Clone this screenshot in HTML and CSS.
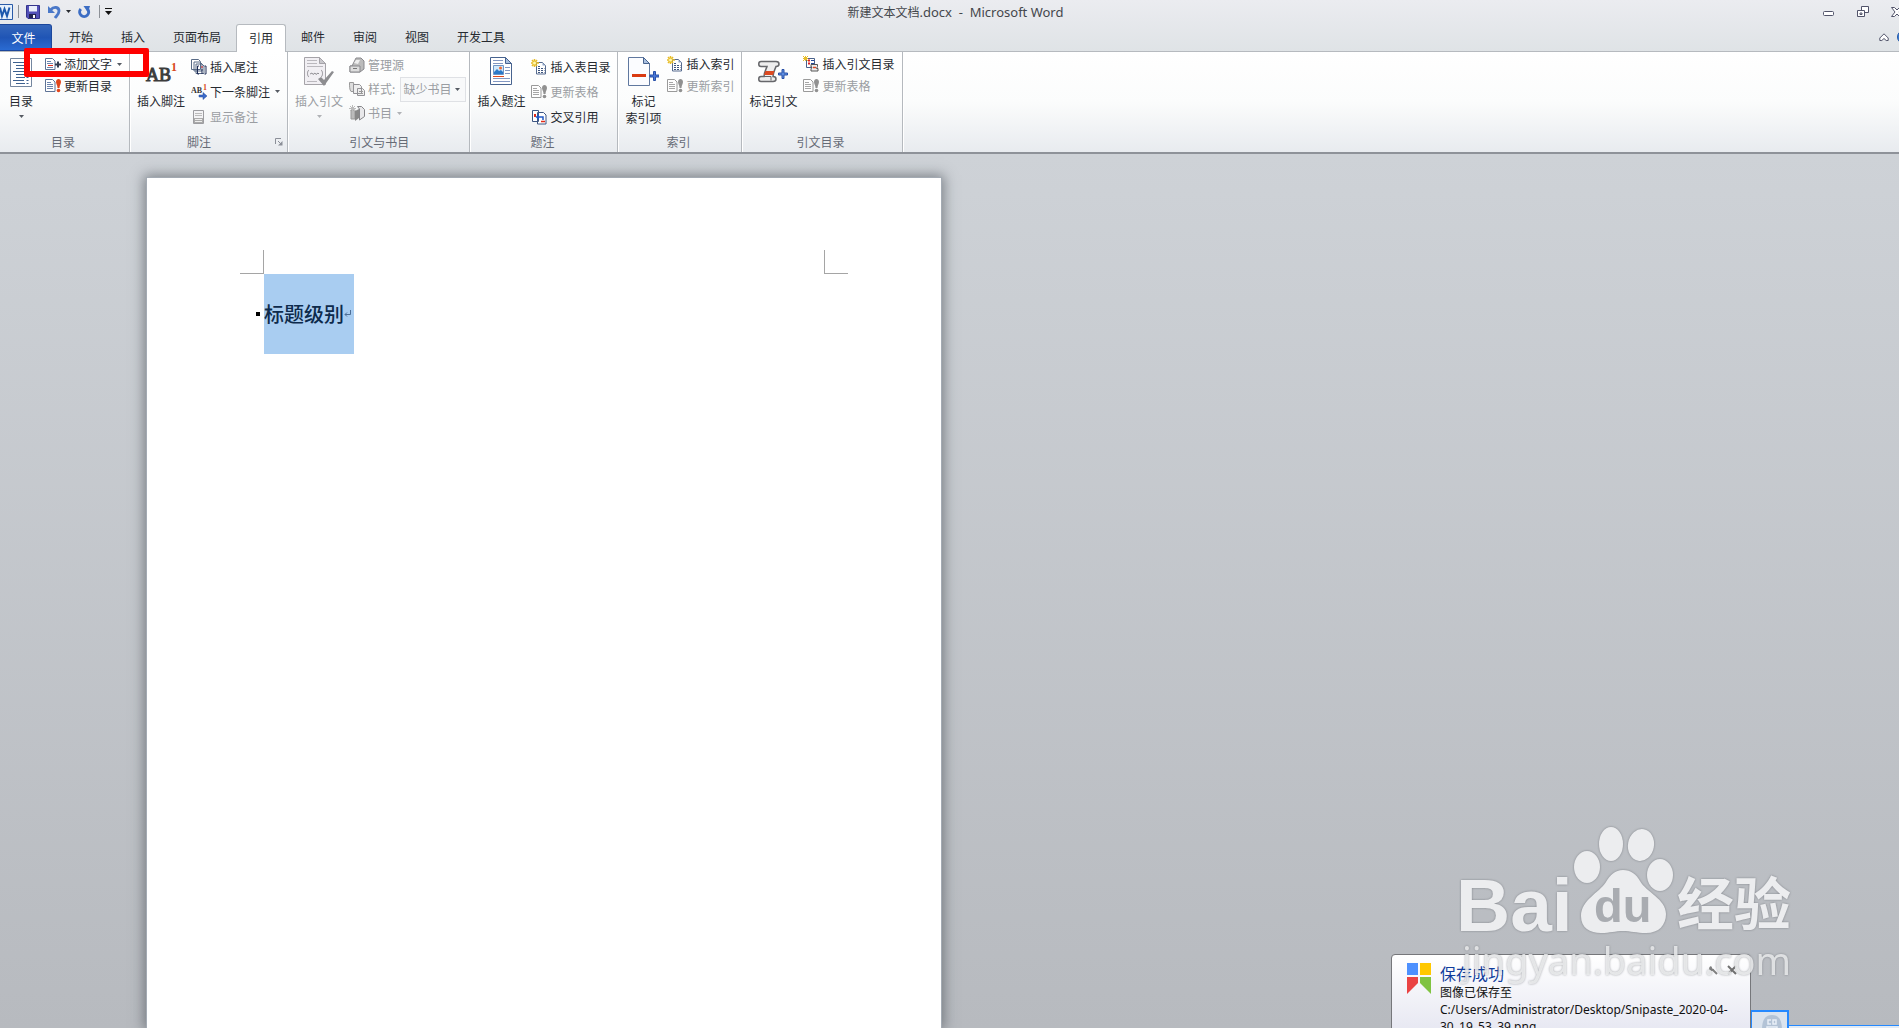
FILE: index.html
```html
<!DOCTYPE html>
<html lang="zh-CN">
<head>
    <meta charset="UTF-8">
    <meta name="viewport" content="width=device-width, initial-scale=1.0">
    <title>新建文本文档.docx - Microsoft Word</title>
    <link rel="stylesheet" href="styles.css">
</head>
<body>
    <!-- Shared icons -->
    <svg class="sprite" aria-hidden="true">
        <symbol id="arrow" viewBox="0 0 5 3"><path d="M0 0h5L2.5 3z" fill="currentColor"/></symbol>
        <symbol id="update" viewBox="0 0 16 16">
            <path d="M.5 1.500h7l2.500 2.500v9.500H.5z" fill="#fff" stroke="#5e7396"/>
            <path d="M2 4.500h4M2 6.500h6M2 8.500h6M2 10.500h6" stroke="#6b84ad"/>
            <path d="M11 4c0-4 5-4 5 0 0 2-1.500 3-1.500 6h-2C12.500 7 11 6 11 4z" fill="#e2461b"/>
            <circle cx="13.500" cy="12.500" r="1.800" fill="#e2461b"/>
        </symbol>
        <symbol id="table-new" viewBox="0 0 16 16">
            <path d="M5.500 3.500h6l3 3v8.500h-9z" fill="#fff" stroke="#566b8f"/>
            <path d="M11.500 3.500v3h3z" fill="#8ea4c5"/>
            <path d="M7 7.500h3M7 9.500h6.500M7 11.500h6.500M7 13.500h6.500" stroke="#3e557e" stroke-dasharray="2 1"/>
            <path d="M3.500 0v8M0 4h8M1 1l5 6M6 1L1 7" stroke="#e8bd28" stroke-width="1.500"/>
            <circle cx="3.500" cy="4" r="1.500" fill="#fff8b0"/>
        </symbol>
    </svg>

    <div class="titlebar">
        <div class="quick-access">
            <button class="icon-btn" aria-label="Word"><svg width="13" height="16" viewBox="0 0 13 16"><path d="M0 .5h12.500v15H0" fill="#e6f0fb" stroke="#2a5ba8"/><path d="M0 3.500l2 8.500L4.500 5l2.500 7 2.500-8.500" fill="none" stroke="#1c58ad" stroke-width="2"/></svg></button>
            <span class="divider"></span>
            <button class="icon-btn save" aria-label="保存"><svg width="14" height="14" viewBox="0 0 14 14"><path d="M.5.5h13v13H2l-1.500-1.500z" fill="#5250b8" stroke="#34348c"/><path d="M3 1h8v5.500H3z" fill="#e9eefb"/><path d="M3 9h7v4H3z" fill="#222452"/><path d="M7 10h2v3H7z" fill="#fff"/></svg></button>
            <button class="icon-btn" aria-label="撤消"><svg width="13" height="14" viewBox="0 0 13 14"><path d="M2.500 5C6 1 11 2 11 6c0 3-2 4.500-4 7" fill="none" stroke="#4a78c8" stroke-width="2.800"/><path d="M0 1v7h7z" fill="#4a78c8"/></svg></button>
            <button class="icon-btn" aria-label="撤消列表"><svg width="5" height="3"><use href="#arrow"/></svg></button>
            <button class="icon-btn redo" aria-label="重复"><svg width="13" height="14" viewBox="0 0 13 14"><path d="M2.800 4A4.500 4.500 0 1 0 9.500 4" fill="none" stroke="#3c6dc4" stroke-width="3"/><path d="M5.500 1H12L10 7.500z" fill="#3c6dc4"/></svg></button>
            <span class="divider"></span>
            <button class="icon-btn" aria-label="自定义快速访问工具栏"><svg width="7" height="7" viewBox="0 0 7 7"><path d="M0 0h7v1H0zM0 3h7L3.500 7z" fill="#111"/></svg></button>
        </div>
        <div class="title">新建文本文档<span>.docx&nbsp; -&nbsp; Microsoft Word</span></div>
        <div class="window-controls">
            <button class="icon-btn" aria-label="最小化"><svg width="12" height="12" viewBox="0 0 12 12"><rect x=".5" y="5.500" width="10" height="4" rx="1" fill="#fff" stroke="#52546a"/></svg></button>
            <button class="icon-btn" aria-label="还原"><svg width="12" height="12" viewBox="0 0 12 12" fill="#fff" stroke="#52546a"><path d="M4.500.5h7v6h-7z"/><path d="M.5 4.500h7v6h-7zM3 7h2v1.500H3z"/></svg></button>
            <button class="icon-btn" aria-label="关闭"><svg width="12" height="12" viewBox="0 0 12 12"><path d="M.5 1.500h3L6 4l2.500-2.500h3L8 6l3.500 4.500h-3L6 8l-2.500 2.500h-3L4 6z" fill="#fff" stroke="#52546a"/></svg></button>
        </div>
    </div>

    <div class="tabs">
        <button class="file-tab">文件</button>
        <button class="tab">开始</button>
        <button class="tab">插入</button>
        <button class="tab">页面布局</button>
        <button class="tab active">引用</button>
        <button class="tab">邮件</button>
        <button class="tab">审阅</button>
        <button class="tab">视图</button>
        <button class="tab">开发工具</button>
        <div class="tab-tools">
            <button class="icon-btn" aria-label="功能区最小化"><svg width="10" height="9" viewBox="0 0 10 9"><path d="M5 .8L.8 5v2.500h2L5 5.500l2.200 2h2V5z" fill="#fff" stroke="#52546a"/></svg></button>
            <button class="icon-btn" aria-label="帮助"><svg width="14" height="14"><circle cx="7" cy="7" r="6.500" fill="#3d7bd0" stroke="#2459a8"/></svg></button>
        </div>
    </div>

    <div class="ribbon">
        <div class="group toc">
            <div class="group-body">
                <button class="big">
                    <svg width="32" height="32" viewBox="0 0 32 32"><path d="M5.500 2.500h21v28h-21z" fill="#fff" stroke="#73869f"/><path d="M8 6.500h11M11 9.500h9M11 12.500h9M8 15.500h11M11 18.500h9M11 21.500h9M8 24.500h11M11 27.500h9" stroke="#3d618f"/><path d="M22.500 6v23" stroke="#3d618f" stroke-width="2" stroke-dasharray="1 2"/></svg>
                    <span>目录</span>
                    <svg class="arrow" width="5" height="3"><use href="#arrow"/></svg>
                </button>
                <div class="rows">
                    <button class="row"><svg width="16" height="16" viewBox="0 0 16 16"><path d="M.5 2.500h7l2.500 2.500v8.500H.5z" fill="#fff" stroke="#5e7396"/><path d="M2 5.500h4M2 7.500h6M2 11.500h6" stroke="#6b84ad"/><path d="M3 9.500h5" stroke="#e03020"/><path d="M10 8.500h6M13 5.500v6" stroke="#333c50" stroke-width="2"/></svg>添加文字<svg class="arrow" width="5" height="3"><use href="#arrow"/></svg></button>
                    <button class="row"><svg width="16" height="16"><use href="#update"/></svg>更新目录</button>
                </div>
            </div>
            <div class="group-name">目录</div>
        </div>

        <div class="group notes">
            <div class="group-body">
                <button class="big">
                    <svg width="32" height="32" viewBox="0 0 32 32"><text x="1" y="25" class="ab">AB</text><text x="26" y="15" class="ab-one">1</text></svg>
                    <span>插入脚注</span>
                </button>
                <div class="rows three">
                    <button class="row"><svg width="16" height="16" viewBox="0 0 16 16"><path d="M.5.5h7l2 2v8h-9zM3 3h6l2 2v7H3zM5 5h6l2 2v7.500H5z" fill="#fff" stroke="#596b86"/><path d="M8 7H6.500v8H8M13.500 7H15v8h-1.500M11 10v5" fill="none" stroke="#1d2a55"/><path d="M10 8h2" stroke="#d22"/></svg>插入尾注</button>
                    <button class="row"><svg width="16" height="16" viewBox="0 0 16 16"><text x="0" y="9" class="ab-small">AB</text><text x="12" y="6" class="ab-small-one">1</text><path d="M8 11h4V8.500l4 3.500-4 3.500V13H8z" fill="#3a6bcb" stroke="#234a9b" stroke-width=".5"/></svg>下一条脚注<svg class="arrow" width="5" height="3"><use href="#arrow"/></svg></button>
                    <button class="row" disabled><svg width="16" height="16" viewBox="0 0 16 16"><path d="M2.500 1.500h10v13h-10z" fill="#f3f3f5" stroke="#9c9ca0"/><path d="M4 4.500h7M4 6.500h7" stroke="#bbb"/><path d="M3 9h9v5H3z" fill="#aaa"/><path d="M4 10.500h7M4 12.500h7" stroke="#eee"/></svg>显示备注</button>
                </div>
            </div>
            <div class="group-name">脚注<button class="icon-btn launcher" aria-label="脚注和尾注"><svg width="8" height="8" viewBox="0 0 8 8"><path d="M.5 6V.5H6" fill="none" stroke="#8b8f98"/><path d="M3 3l3 3" stroke="#8b8f98"/><path d="M7.500 3v4.500H3z" fill="#8b8f98"/></svg></button></div>
        </div>

        <div class="group citations">
            <div class="group-body">
                <button class="big" disabled>
                    <svg width="32" height="32" viewBox="0 0 32 32"><path d="M1.500 1.500h15l6 6v21h-21z" fill="#f1eff3" stroke="#a5a3a8"/><path d="M16.500 1.500v6h6z" fill="#c9c8cc" stroke="#a5a3a8"/><path d="M4 4.500h10M4 7.500h10M4 10.500h16M4 25.500h10" stroke="#bab8bd"/><path d="M6 14c-2 1-2 6 0 7M18 14c2 1 2 6 0 7M7 18l2-1 1 1.500 2-1.500 1 1.500 2-1.500 1 1" fill="none" stroke="#8f8e93"/><path d="M15 23l3-2 3 3L29 15l2 1-10 14z" fill="#8d8d90"/></svg>
                    <span>插入引文</span>
                    <svg class="arrow" width="5" height="3"><use href="#arrow"/></svg>
                </button>
                <div class="rows">
                    <button class="row" disabled><svg width="16" height="16" viewBox="0 0 16 16"><path d="M5 5l2-4h5l3 3v8l-4 3H1V9h2z" fill="#bbb" stroke="#89898d"/><path d="M5 6l2-3h4l-2 4z" fill="#eee"/><path d="M1 9h10v6H1z" fill="#ddd" stroke="#89898d"/><path d="M4 11.500h4" stroke="#777"/></svg>管理源</button>
                    <div class="row style-row">
                        <svg width="16" height="16" viewBox="0 0 16 16"><path d="M.5 1.500h4l1 9H2C.5 9 .5 5 .5 1.500z" fill="#ddd" stroke="#999"/><path d="M4.500 3.500h6l2 2v7h-8zM8.500 7.500h5l2 2v5h-7z" fill="#eee" stroke="#929296"/><path d="M10 10.500h4M10 12.500h4" stroke="#999"/></svg>
                        <label for="citation-style">样式:</label>
                        <span class="combo">
                            <select id="citation-style" disabled><option>缺少书目</option></select>
                            <svg class="arrow" width="5" height="3"><use href="#arrow"/></svg>
                        </span>
                    </div>
                    <button class="row" disabled><svg width="16" height="16" viewBox="0 0 16 16"><path d="M2 5h4v9H2z" fill="#bbb" stroke="#999"/><path d="M6 6l4-2v9l-4 3z" fill="#888"/><path d="M8.500 1.500h4l3 3v7l-5 3.500V4z" fill="#e8e8ea" stroke="#858589"/><path d="M3.500 0v7M0 3.500h7M1 1l5 5M6 1L1 6" stroke="#bbb"/></svg>书目<svg class="arrow" width="5" height="3"><use href="#arrow"/></svg></button>
                </div>
            </div>
            <div class="group-name">引文与书目</div>
        </div>

        <div class="group">
            <div class="group-body">
                <button class="big">
                    <svg width="32" height="32" viewBox="0 0 32 32"><path d="M5.500 1.500h15l6 6v21h-21z" fill="#fff" stroke="#47638f"/><path d="M20.500 1.500v6h6z" fill="#a9bfdf" stroke="#47638f"/><path d="M8 4.500h10M8 7.500h10M20 11.500h5M20 14.500h5M20 17.500h5M8 22.500h17M8 25.500h17" stroke="#8297c2"/><path d="M8.500 9.500h10v9h-10z" fill="#cfe8fb" stroke="#6f95c6"/><path d="M9 16l3-3 2 2 2-1 2 2v2H9z" fill="#2b79c9"/><circle cx="15.500" cy="12" r="1.500" fill="#f06a30"/><path d="M8 20.500h11" stroke="#e0491c"/></svg>
                    <span>插入题注</span>
                </button>
                <div class="rows three">
                    <button class="row"><svg width="16" height="16"><use href="#table-new"/></svg>插入表目录</button>
                    <button class="row" disabled><svg class="gray" width="16" height="16"><use href="#update"/></svg>更新表格</button>
                    <button class="row"><svg width="16" height="16" viewBox="0 0 16 16"><path d="M1.500 1.500h6v11h-6zM6.500 3.500h6l2.500 2.500v9H6.500z" fill="#fff" stroke="#3d5683"/><path d="M3 5h2v3H3z" fill="#e22a18"/><path d="M12 11V8H6" fill="none" stroke="#2158c4" stroke-width="1.500"/><path d="M8 5v6L4.500 8z" fill="#2158c4"/><path d="M10 12.500h4" stroke="#e22a18" stroke-width="1.500"/></svg>交叉引用</button>
                </div>
            </div>
            <div class="group-name">题注</div>
        </div>

        <div class="group">
            <div class="group-body">
                <button class="big">
                    <svg width="32" height="32" viewBox="0 0 32 32"><path d="M1.500 1.500h15l6 6v22h-21z" fill="#fbfcff" stroke="#60789f"/><path d="M16.500 1.500v6h6z" fill="#a9bfdf" stroke="#47638f"/><path d="M5 18h14v3H5z" fill="#d93a12"/><path d="M26.500 15.500h2v3.500H32v2h-3.500v3.500h-2V21H23v-2h3.500z" fill="#4a78d8" stroke="#2850a8"/></svg>
                    <span>标记<br>索引项</span>
                </button>
                <div class="rows">
                    <button class="row"><svg width="16" height="16"><use href="#table-new"/></svg>插入索引</button>
                    <button class="row" disabled><svg class="gray" width="16" height="16"><use href="#update"/></svg>更新索引</button>
                </div>
            </div>
            <div class="group-name">索引</div>
        </div>

        <div class="group">
            <div class="group-body">
                <button class="big">
                    <svg width="32" height="32" viewBox="0 0 32 32"><path d="M4 5.500h15c4 0 4 5 0 5-1 3-3 6-3 10 4 0 4 5 0 5H4c-3 0-3-5 0-5h3c0-4 2-7 3-10H4c-3 0-3-5 0-5z" fill="#eee" stroke="#66676b" stroke-width="1.500"/><path d="M4 20.500h10v4" fill="none" stroke="#66676b"/><path d="M8.500 15h9l-1.500 4H7z" fill="#dc4a22"/><path d="M25 13.500h2V17h3.500v2H27v3.500h-2V19h-3.500v-2H25z" fill="#5f8ee0" stroke="#2850a8"/></svg>
                    <span>标记引文</span>
                </button>
                <div class="rows">
                    <button class="row"><svg width="16" height="16" viewBox="0 0 16 16"><path d="M3.500 2.500h8v9h-8z" fill="#fff" stroke="#49618b"/><path d="M5 4.500h2M5 7.500h2" stroke="#d22" stroke-width="2"/><path d="M8 4.500h3M8 7.500h3" stroke="#234a9b"/><path d="M8 8.500h6.500v2l-1 2h1.500v2.500H8v-2l1-2H8z" fill="#eee" stroke="#555"/><path d="M10 11.500h3" stroke="#dc4a22" stroke-width="1.500"/><path d="M2.500 0v5M0 2.500h5M0 0l5 5M5 0L0 5" stroke="#e8bd28"/></svg>插入引文目录</button>
                    <button class="row" disabled><svg class="gray" width="16" height="16"><use href="#update"/></svg>更新表格</button>
                </div>
            </div>
            <div class="group-name">引文目录</div>
        </div>
    </div>
    <div class="highlight"></div>

    <div class="workspace">
        <div class="paper">
            <div class="crop-marks">
                <span class="crop left"></span>
                <span class="crop right"></span>
            </div>
            <div class="heading">
                <span class="bullet"></span>
                <h1>标题级别<svg width="7" height="8" viewBox="0 0 7 8"><path d="M6.500 0v4.500H1M3 2.500l-2 2 2 2" fill="none" stroke="#4d6e96"/></svg></h1>
            </div>
        </div>
    </div>

    <div class="snip">
        <div class="snip-box"><svg width="24" height="16" viewBox="0 0 24 16"><path d="M2 16C2 6 5 1 12 1s10 5 10 15z" fill="#b3c3d6"/><path d="M11 6H8v4h3M13 6h3v4h-3zM7 13h10v3H7z" fill="none" stroke="#e9f0f8" stroke-width="1.500"/></svg></div>
        <div class="snip-line"></div>
    </div>

    <div class="toast">
        <svg width="24" height="31" viewBox="0 0 24 31"><path d="M0 0h11v12H0z" fill="#4d90fe"/><path d="M13 0h11v12H13z" fill="#ffc800"/><path d="M0 14h11v6L0 31z" fill="#ea4343"/><path d="M13 14h11v17L13 20z" fill="#80c342"/></svg>
        <div class="toast-text">
            <div class="toast-title">保存成功</div>
            <p>图像已保存至<br>C:/Users/Administrator/Desktop/Snipaste_2020-04-30_19_53_39.png</p>
        </div>
        <div class="toast-tools">
            <button class="icon-btn" aria-label="设置"><svg width="10" height="10" viewBox="0 0 10 10"><path d="M4 4l5 5" stroke="#808080" stroke-width="2"/><path d="M3 1a2.500 2.500 0 1 0 3 3L4 4V2.500z" fill="#808080"/></svg></button>
            <button class="icon-btn" aria-label="关闭通知"><svg width="10" height="10" viewBox="0 0 10 10"><path d="M1 1l8 8M9 1L1 9" stroke="#707070" stroke-width="2"/></svg></button>
        </div>
    </div>

    <svg class="watermark" width="370" height="180" viewBox="0 0 370 180" role="img" aria-label="Baidu 经验">
        <g fill="#ecedef">
            <ellipse cx="137" cy="47" rx="13" ry="16"/>
            <ellipse cx="161" cy="24" rx="12" ry="17"/>
            <ellipse cx="191" cy="25" rx="13" ry="16" transform="rotate(10 191 25)"/>
            <ellipse cx="210" cy="55" rx="13" ry="16"/>
            <path d="M173 50c-8 0-13 5-17 12-7 11-25 18-25 34 0 12 9 17 20 17 9 0 14-2 22-2s13 2 23 2c13 0 20-8 20-19 0-15-20-22-26-33-4-7-9-11-17-11z"/>
            <text x="6" y="111" class="wm-brand">Bai</text>
            <text x="227" y="105" class="wm-cn">经验</text>
            <text x="12" y="155" class="wm-url">jingyan.baidu.com</text>
        </g>
        <text x="144" y="102" class="wm-du">du</text>
    </svg>
</body>
</html>
```

FILE: styles.css
```css
* {
    box-sizing: border-box;
}

body {
    display: flex;
    flex-direction: column;
    position: relative;
    height: 100vh;
    margin: 0;
    overflow: hidden;
    font-family: "Noto Sans CJK SC", sans-serif;
    font-size: 12px;
    line-height: 16px;
    color: #262a30;
    background: linear-gradient(#ebecf0, #dfe3e6 52px);
}

button {
    margin: 0;
    padding: 0;
    border: none;
    background: none;
    font: inherit;
    color: inherit;
    white-space: nowrap;
}

svg {
    display: block;
    flex: none;
}

.sprite {
    position: absolute;
    width: 0;
    height: 0;
}

.icon-btn {
    display: flex;
    align-items: center;
}

/* Title bar */
.titlebar {
    display: flex;
    height: 23px;
}

.quick-access {
    display: flex;
    align-items: center;
    width: 112px;
    gap: 5px;
}

.divider {
    width: 1px;
    height: 13px;
    background: #8d9197;
}

.quick-access .save,
.quick-access .redo {
    margin: 0 3px 0 2px;
}

.title {
    flex: 1;
    padding: 4px 24px 0 0;
    text-align: center;
    color: #44474c;
}

.title span {
    font-family: "Noto Sans", sans-serif;
    font-size: 13px;
}

.window-controls {
    display: flex;
    align-items: center;
    gap: 22px;
    width: 76px;
}

.window-controls button {
    flex: none;
}

/* Tabs */
.tabs {
    display: flex;
    height: 29px;
    border-bottom: 1px solid #b6babf;
}

.file-tab {
    width: 52px;
    margin: 1px 3px 0 0;
    padding-right: 4px;
    border: 1px solid #1b479c;
    border-left: none;
    border-radius: 0 3px 0 0;
    background: linear-gradient(#3567bb, #2055b5 50%, #2a6bd2);
    color: #fff;
}

.tab {
    padding: 0 14px;
}

.tab.active {
    height: 28px;
    margin: 1px 1px 0;
    padding: 0 12px 2px;
    border: 1px solid #b6babf;
    border-bottom: none;
    border-radius: 3px 3px 0 0;
    background: #fff;
}

.tab-tools {
    display: flex;
    align-items: center;
    gap: 8px;
    width: 20px;
    margin-left: auto;
}

/* Ribbon */
.ribbon {
    display: flex;
    height: 102px;
    border-bottom: 2px solid #8e9299;
    background: linear-gradient(#fff, #fbfcfc 50%, #e8ebef);
}

.group {
    display: flex;
    flex-direction: column;
    padding: 1px 7px 0 4px;
    border-right: 1px solid #b5b9be;
    box-shadow: 1px 0 #fff;
}

.group.toc {
    padding-left: 0;
}

.group.citations {
    padding-right: 3px;
}

.group-body {
    display: flex;
    flex: 1;
    gap: 3px;
}

.big {
    display: flex;
    flex-direction: column;
    align-items: center;
    min-width: 42px;
    padding: 3px 3px 0;
    line-height: 17px;
}

.big span {
    margin-top: 4px;
}

.big .arrow {
    margin-top: 6px;
}

.rows .row {
    display: flex;
    align-items: center;
    gap: 3px;
    height: 22px;
}

.rows.three .row {
    height: 25px;
}

.rows.three {
    margin-top: 1px;
}

.citations .rows .row {
    height: 24px;
}

.row .arrow {
    margin-left: 2px;
}

.arrow {
    color: #555a62;
}

button:disabled,
.style-row label,
.combo select {
    color: #9a9da2;
    opacity: 1;
}

button:disabled .arrow {
    color: #b0b2b6;
}

.gray {
    filter: grayscale(1);
    opacity: 0.7;
}

.combo {
    display: flex;
    align-items: center;
    width: 66px;
    height: 25px;
    margin-left: 2px;
    padding: 0 5px 0 2px;
    border: 1px solid #dfe1e5;
    background: #f8f9fa;
}

.combo select {
    flex: 1;
    min-width: 0;
    padding: 0;
    border: none;
    appearance: none;
    background: none;
    font: inherit;
}

.group-name {
    position: relative;
    padding-bottom: 2px;
    text-align: center;
    color: #666b76;
}

.toc .group-name {
    padding-left: 4px;
}

.notes .group-name {
    padding-right: 16px;
}

.launcher {
    position: absolute;
    right: -3px;
    bottom: 6px;
}

.ab {
    font: 18px "Liberation Serif", serif;
    fill: #3c3c3c;
    stroke: #3c3c3c;
    stroke-width: 1px;
}

.ab-one {
    font: bold 12px "Liberation Serif", serif;
    fill: #d94a20;
}

.ab-small {
    font: bold 8px "Liberation Serif", serif;
    fill: #333;
}

.ab-small-one {
    font: bold 8px "Liberation Serif", serif;
    fill: #d94a20;
}

/* Red frame over the add-text command */
.highlight {
    position: absolute;
    left: 24px;
    top: 48px;
    width: 125px;
    height: 29px;
    border: 6px solid #fe0000;
    border-radius: 2px;
    pointer-events: none;
}

/* Document */
.workspace {
    display: flex;
    flex: 1;
    padding: 23px 0 0 146px;
    background: linear-gradient(#ced2d7, #b7babf);
}

.paper {
    width: 796px;
    border: 1px solid #a3aab3;
    border-bottom: none;
    background: #fff;
    box-shadow: 0 0 12px 2px rgba(70, 76, 84, 0.6);
}

.crop-marks {
    display: flex;
    justify-content: space-between;
    padding: 72px 93px 0;
}

.crop {
    width: 24px;
    height: 24px;
    border-bottom: 1px solid #a5a5a5;
}

.crop.left {
    border-right: 1px solid #a5a5a5;
}

.crop.right {
    border-left: 1px solid #a5a5a5;
}

.heading {
    display: flex;
    align-items: center;
    gap: 4px;
    padding-left: 109px;
}

.bullet {
    width: 4px;
    height: 4px;
    background: #000;
}

h1 {
    display: flex;
    align-items: center;
    width: 90px;
    margin: 0;
    background: #a9cdf1;
    font-size: 20px;
    font-weight: 500;
    line-height: 80px;
    color: #0d2a4c;
}

/* Notification */
.toast {
    display: flex;
    position: absolute;
    right: 148px;
    bottom: -16px;
    width: 360px;
    height: 90px;
    padding: 8px 12px 0 15px;
    border: 1px solid #76777b;
    border-radius: 4px;
    background: linear-gradient(#fff, #e3e4f0);
    color: #111;
}

.toast-text {
    flex: 1;
    min-width: 0;
    margin-left: 9px;
    line-height: 17px;
}

.toast-title {
    font-size: 16px;
    line-height: 21px;
    color: #0f3c9c;
}

.toast p {
    margin: 0;
    font-family: "Noto Sans", "Noto Sans CJK SC", sans-serif;
    overflow-wrap: anywhere;
}

.toast-tools {
    display: flex;
    position: absolute;
    top: 10px;
    right: 13px;
    gap: 9px;
}

/* Screenshot frame */
.snip {
    display: flex;
    position: absolute;
    right: 0;
    bottom: 0;
    width: 149px;
    height: 18px;
}

.snip-box {
    width: 39px;
    padding: 2px 0 0 8px;
    border: 2px solid #2589ff;
    border-bottom: none;
    background: #dae3ee;
}

.snip-line {
    flex: 1;
    height: 3px;
    margin-top: 15px;
    border-top: 1px solid #2589ff;
    background: #e3ebf4;
}

/* Watermark */
.watermark {
    position: absolute;
    right: 79px;
    bottom: 28px;
    filter: drop-shadow(0 0 1px rgba(90, 94, 100, 0.6));
    pointer-events: none;
}

.wm-brand {
    font: bold 75px "Liberation Sans", sans-serif;
}

.wm-cn {
    font: bold 57px "Noto Sans CJK SC", sans-serif;
}

.wm-url {
    font: 38px "Noto Sans", sans-serif;
    fill-opacity: 0.85;
}

.wm-du {
    font: bold 47px "Liberation Sans", sans-serif;
    fill: #a9acb1;
}
```
